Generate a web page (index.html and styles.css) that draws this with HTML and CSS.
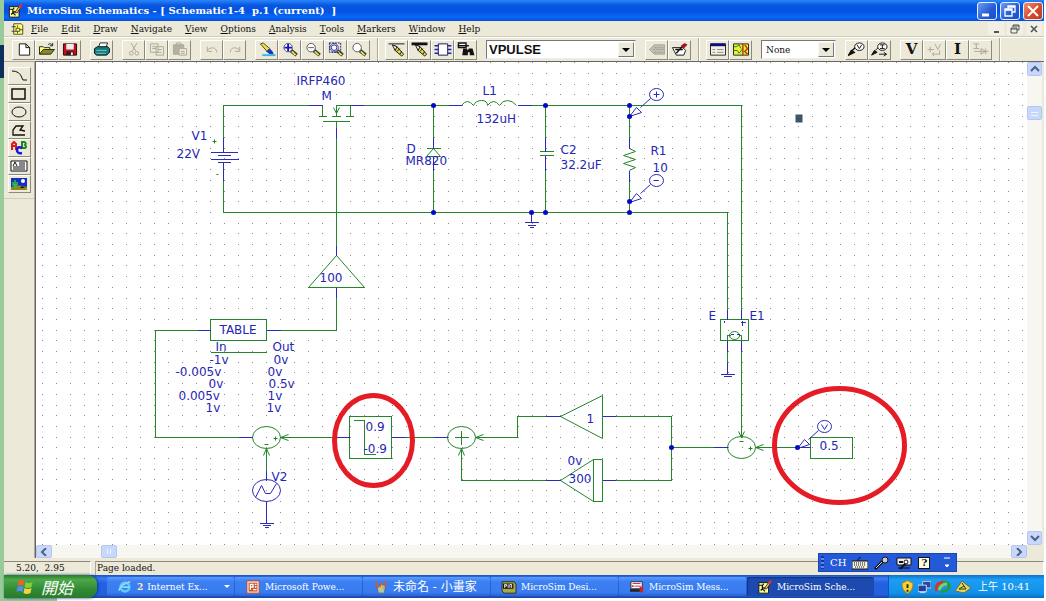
FILE: index.html
```html
<!DOCTYPE html>
<html lang="zh-Hant">
<head>
<meta charset="utf-8">
<title>MicroSim Schematics</title>
<link rel="stylesheet" href="styles.css">
</head>
<body>
<svg class="defs" aria-hidden="true">
  <symbol id="app" viewBox="0 0 16 16"><path d="M1 3h11v12H1z" fill="#ffff98" stroke="#111"/><path d="M1 6h4v3h3M3 12l2-2 3 3M6 4v2" fill="none" stroke="#111" stroke-width="1.4"/><path d="M7 10l5-7 2 1-4 6z" fill="#e8c070" stroke="#222"/><path d="M11 3l3-3 2 1-2 4z" fill="#d33"/></symbol>
  <symbol id="lens" viewBox="0 0 18 16"><path d="M10 9l6 5" stroke="#333" stroke-width="4"/><path d="M11 10l4 4" stroke="#e8e04a" stroke-width="2"/><circle cx="7" cy="6" r="4.500" fill="#fff" stroke="#555"/></symbol>
  <symbol id="pencil" viewBox="0 0 18 16"><path d="M6 4l3 1 7 8-2 2-7-6z" fill="#e8df3f" stroke="#111"/><path d="M4 3l5 2-2 4z" fill="#fff" stroke="#111"/><path d="M9 10l3-3M12 13l2-3" stroke="#111"/></symbol>
</svg>
<main class="window">
  <header class="title">
    <svg class="ico"><use href="#app"/></svg>
    <h1>MicroSim Schematics - [ Schematic1-4 &nbsp;p.1 (current) &nbsp;]</h1>
    <div class="winbtns">
      <button type="button" aria-label="Minimize"><svg viewBox="0 0 18 16"><path d="M4 12h7" stroke="#fff" stroke-width="3"/></svg></button>
      <button type="button" aria-label="Restore"><svg viewBox="0 0 18 16"><path d="M7 6V3h7v6h-3M7 4h7M4 6h7v7H4zM4 7h7" fill="none" stroke="#fff" stroke-width="1.300"/></svg></button>
      <button type="button" class="close" aria-label="Close"><svg viewBox="0 0 18 16"><path d="M4 3l10 10M14 3L4 13" stroke="#fff" stroke-width="2"/></svg></button>
    </div>
  </header>
  <nav class="menu">
    <svg class="ico" viewBox="0 0 16 16"><path d="M3 1h10l2 2v12H3z" fill="#ffff70" stroke="#222"/><path d="M0 5h6M0 11h6M8 3v3M6 7h5v4H6zM11 9h4M8 11v3" fill="none" stroke="#222"/></svg>
    <button type="button"><u>F</u>ile</button><button type="button"><u>E</u>dit</button><button type="button"><u>D</u>raw</button><button type="button"><u>N</u>avigate</button><button type="button"><u>V</u>iew</button><button type="button"><u>O</u>ptions</button><button type="button"><u>A</u>nalysis</button><button type="button"><u>T</u>ools</button><button type="button"><u>M</u>arkers</button><button type="button"><u>W</u>indow</button><button type="button"><u>H</u>elp</button>
    <div class="mdibtns">
      <button type="button" aria-label="Minimize document"><svg viewBox="0 0 14 12"><path d="M5 9h5" stroke="#555" stroke-width="2"/></svg></button>
      <button type="button" aria-label="Restore document"><svg viewBox="0 0 14 12"><path d="M5 4V2h6v5H9M5 3h6M3 5h6v5H3zM3 6h6" fill="none" stroke="#555"/></svg></button>
      <button type="button" aria-label="Close document"><svg viewBox="0 0 14 12"><path d="M4 3l6 6M10 3L4 9" stroke="#555" stroke-width="1.600"/></svg></button>
    </div>
  </nav>
  <div class="toolbar" role="toolbar">
    <div class="group">
      <button type="button" aria-label="New"><svg viewBox="0 0 18 16"><path d="M4 2h7l4 4v8H4zM11 2v4h4" fill="#fff" stroke="#111"/></svg></button>
      <button type="button" aria-label="Open"><svg viewBox="0 0 18 16"><path d="M1 13V5h4l1 1h6v3" fill="#ffff70" stroke="#222"/><path d="M1 13l4-5h12l-4 5z" fill="#8a8a20" stroke="#222"/><path d="M10 3c2-2 4-1 5 1m0-3v3h-3" fill="none" stroke="#222"/></svg></button>
      <button type="button" aria-label="Save"><svg viewBox="0 0 18 16"><path d="M2 2h14v12H2z" fill="#c01020" stroke="#300"/><path d="M5 2h8v6H5z" fill="#eee"/><path d="M5 10h8v4H5z" fill="#222"/><path d="M10 11h2v3h-2z" fill="#eee"/></svg></button>
    </div>
    <div class="group"><button type="button" aria-label="Print"><svg viewBox="0 0 18 16"><path d="M5 6l2-5h8l-2 5" fill="#fff" stroke="#222"/><path d="M1 7l3-2h11l2 2v4l-3 3H3l-2-2z" fill="#127a80" stroke="#111"/><path d="M3 9h11M3 12h10" stroke="#7cc" stroke-width="1"/></svg></button></div>
    <div class="group off">
      <button type="button" aria-label="Cut"><svg viewBox="0 0 18 16"><path d="M6 1l5 9M12 1L7 10" /><circle cx="6" cy="12" r="2"/><circle cx="12" cy="12" r="2"/></svg></button>
      <button type="button" aria-label="Copy"><svg viewBox="0 0 18 16"><path d="M2 2h8v9H2zM4 5h4M4 7h4M8 5h8v9H8zM10 8h4M10 11h4"/></svg></button>
      <button type="button" aria-label="Paste"><svg viewBox="0 0 18 16"><path d="M2 3h11v10H2z" fill="#b5b1a2"/><path d="M5 1h5v3H5z"/><path d="M8 7h8v7H8zM10 10h4M10 12h4" fill="#ece9d8"/></svg></button>
    </div>
    <div class="group off">
      <button type="button" aria-label="Undo"><svg viewBox="0 0 18 16"><path d="M4 5v5h5M4 9c3-4 10-4 10 2"/></svg></button>
      <button type="button" aria-label="Redo"><svg viewBox="0 0 18 16"><path d="M14 5v5H9M14 9C11 5 4 5 4 11"/></svg></button>
    </div>
    <div class="group">
      <button type="button" aria-label="Redraw"><svg viewBox="0 0 18 16"><path d="M2 2l3-1 7 6-3 3z" fill="#f2df22" stroke="#444"/><path d="M8 10l4-3 3 3 1 3h-4z" fill="#1636c0"/><path d="M4 14h14" stroke="#35b5e8" stroke-width="2"/></svg></button>
      <button type="button" aria-label="Zoom in"><svg viewBox="0 0 18 16"><use href="#lens"/><path d="M7 2v8M3 6h8" stroke="#11c" stroke-width="2"/></svg></button>
      <button type="button" aria-label="Zoom out"><svg viewBox="0 0 18 16"><use href="#lens"/><path d="M4 6h6" stroke="#555"/></svg></button>
      <button type="button" aria-label="Zoom area"><svg viewBox="0 0 18 16"><use href="#lens"/><path d="M2 1h12v10H2z" fill="none" stroke="#117" stroke-dasharray="2 1"/><circle cx="7" cy="6" r="3" fill="none" stroke="#11c"/></svg></button>
      <button type="button" aria-label="Zoom to fit"><svg viewBox="0 0 18 16"><use href="#lens"/></svg></button>
    </div>
    <i class="sep"></i>
    <div class="group">
      <button type="button" aria-label="Draw wire"><svg viewBox="0 0 18 16"><path d="M0 2h17" stroke="#111"/><use href="#pencil"/></svg></button>
      <button type="button" aria-label="Draw bus"><svg viewBox="0 0 18 16"><path d="M0 2h17" stroke="#111" stroke-width="3"/><use href="#pencil"/></svg></button>
      <button type="button" aria-label="Draw block"><svg viewBox="0 0 18 16"><path d="M4 2h10v12H4z" fill="#fff" stroke="#115"/><path d="M0 4h4M0 8h4M0 12h4M14 4h4M14 8h4M14 12h4" stroke="#22b" stroke-width="1.500"/></svg></button>
      <button type="button" aria-label="Get new part"><svg viewBox="0 0 18 16"><path d="M1 1h8v5H1zM0 4h12" fill="#fff" stroke="#111" stroke-width="1.500"/><path d="M6 7h4l1 2 1-2h4l2 7h-5v-3h-2v3H5z" fill="#111"/></svg></button>
    </div>
    <label class="combo part"><select aria-label="Part name"><option>VPULSE</option></select><span><svg viewBox="0 0 8 4"><path d="M0 0h8L4 4z"/></svg></span></label>
    <div class="group">
      <button type="button" class="dim" aria-label="Edit attributes"><svg viewBox="0 0 18 16"><path d="M1 8l5-5h11v10H6z" fill="#c2bfb0" stroke="#aaa797"/><path d="M6 6h10M5 8h11M6 11h10" stroke="#999" stroke-dasharray="2 1"/></svg></button>
      <button type="button" aria-label="Edit symbol"><svg viewBox="0 0 18 16"><path d="M1 6h11l3 3-2 5H5l-2-4z" fill="#fff" stroke="#111"/><path d="M5 12l8-9M4 8h8" stroke="#111" stroke-width="1.500"/><path d="M10 4l4-3 3 2-4 4z" fill="#a12"/></svg></button>
    </div>
    <i class="sep"></i>
    <div class="group">
      <button type="button" aria-label="Analysis setup"><svg viewBox="0 0 18 16"><path d="M1 2h16v12H1z" fill="#f4f2e4" stroke="#222"/><path d="M1 3h16" stroke="#117" stroke-width="3"/><path d="M3 8h3M3 11h3M8 8h7M8 11h7" stroke="#888"/></svg></button>
      <button type="button" aria-label="Simulate"><svg viewBox="0 0 18 16"><path d="M1 2h16v12H1z" fill="#e9f238" stroke="#222"/><path d="M1 9h4l2 3 4-5M1 5h3l3-2 2 4" fill="none" stroke="#173"/><path d="M11 2v12M13 3l3 4-3 3 3 3" fill="none" stroke="#b31" stroke-width="1.500"/></svg></button>
    </div>
    <label class="combo color"><select aria-label="Marker colour"><option>None</option></select><span><svg viewBox="0 0 8 4"><path d="M0 0h8L4 4z"/></svg></span></label>
    <div class="group">
      <button type="button" aria-label="Voltage marker"><svg viewBox="0 0 18 16"><path d="M0 14l3-5 3 2zM4 9l4-4" fill="#111" stroke="#111" stroke-width="1.500"/><ellipse cx="11.500" cy="5" rx="5" ry="4" fill="#fff" stroke="#111"/><path d="M9 3l2.500 4L14 3" fill="none" stroke="#111"/></svg></button>
      <button type="button" aria-label="Current marker"><svg viewBox="0 0 18 16"><path d="M0 14l3-5 3 2zM4 9l4-4" fill="#111" stroke="#111"/><path d="M8 13h8m-3-2l3 2-3 2" fill="none" stroke="#111"/><ellipse cx="11.500" cy="5" rx="5" ry="4" fill="#fff" stroke="#111"/><path d="M9 3h5M11.500 3v4M9 7h5" stroke="#111"/></svg></button>
    </div>
    <div class="group letters">
      <button type="button" aria-label="Show voltages">V</button>
      <button type="button" class="dim" aria-label="Toggle voltage"><svg viewBox="0 0 18 16"><path d="M1 8h7M4 5v6M9 2l3 6 3-6M6 13h8V9M8 11l-2 2 2 2" fill="none" stroke="#aaa797"/></svg></button>
      <button type="button" aria-label="Show currents">I</button>
      <button type="button" class="dim" aria-label="Toggle current"><svg viewBox="0 0 18 16"><path d="M1 2h6M4 2v5M1 7h6M2 10h15M9 7v6l5-3zM14 7v6" fill="none" stroke="#aaa797"/></svg></button>
    </div>
    <i class="sep"></i>
  </div>
  <section class="work">
    <aside class="palette">
      <div>
      <button type="button" aria-label="Arc"><svg viewBox="0 0 18 14"><path d="M2 2q8 0 10 7l1 2h4" fill="none" stroke="#111"/></svg></button>
      <button type="button" aria-label="Box"><svg viewBox="0 0 18 14"><path d="M2 2h13v10H2z" fill="none" stroke="#111" stroke-width="1.500"/></svg></button>
      <button type="button" aria-label="Circle"><svg viewBox="0 0 18 14"><ellipse cx="9" cy="7" rx="7" ry="5" fill="none" stroke="#111"/></svg></button>
      <button type="button" aria-label="Polyline"><svg viewBox="0 0 18 14"><path d="M15 12H3V7l3-4h7l-3 4 5 1" fill="none" stroke="#111" stroke-width="1.300"/></svg></button>
      <button type="button" aria-label="Text"><svg viewBox="0 0 18 14"><path d="M2 9V3l2-2 2 2v6M2 5h4" fill="none" stroke="#e01818" stroke-width="2"/><path d="M12 1v6h3q2-1 0-3 2-2-1-3z" fill="none" stroke="#178a26" stroke-width="2"/><path d="M12 7q-5-2-5 2t5 3" fill="none" stroke="#1818d8" stroke-width="2.500"/></svg></button>
      <button type="button" aria-label="Text box"><svg viewBox="0 0 18 14"><path d="M1 2h16v10H1z" fill="#fff" stroke="#111"/><path d="M3 7l2-4 2 4M9 4h6M9 6h6M3 8h12M3 10h12" fill="none" stroke="#111"/></svg></button>
      <button type="button" aria-label="Picture"><svg viewBox="0 0 18 14"><path d="M1 1h16v12H1z" fill="#1230c0"/><path d="M1 10q8-3 16 0v3H1z" fill="#8a8a20"/><path d="M5 3v8M3 5v3h4V5" fill="none" stroke="#2fc44a" stroke-width="1.500"/><circle cx="13" cy="4" r="2" fill="#fff"/><path d="M10 11l2-2 3 2z" fill="#111"/></svg></button>
      </div>
    </aside>
    <div class="view">
      <svg class="canvas" role="img" aria-label="Buck converter schematic">
        <defs>
          <pattern id="grid" width="14" height="107" patternUnits="userSpaceOnUse" patternTransform="translate(6,0)"><path d="M0 0h1v1H0zM0 11h1v1H0zM0 22h1v1H0zM0 32h1v1H0zM0 43h1v1H0zM0 54h1v1H0zM0 64h1v1H0zM0 75h1v1H0zM0 86h1v1H0zM0 96h1v1H0z" fill="#8c8c8c"/></pattern>
          <g id="probe"><path d="M21 -18L11 -9M0 0L7 -9L12 -4Z"/><ellipse cx="27" cy="-22" rx="7" ry="6"/></g>
        </defs>
        <rect width="100%" height="100%" fill="url(#grid)"/>
        <g transform="translate(-35.5,-61.5)">
          <g class="wire">
            <path d="M223 137V105H308M322 105V116M318 116H326M331 116H340M336 116V105H350V116M345 116H353M322 121H349M336 121V127M336 138V245M363 105H448M531 105H741V309"/>
            <path d="M223 180V212H727V309M433 105V137M433 170V212M545 105V137M545 170V212M629 105V137M629 181V212"/>
            <path d="M539 151H553M539 155H553M426 148H440M336 297V330H280M210 319H266V340H210ZM197 330H155V437H238M210 352H266"/>
            <path d="M280 437H335M266 448V470M349 416H391V458H349ZM353 420H364V454H375M405 437H433M475 437H517V416H545M615 416H671V480H615M545 480H461V448M671 447H713M755 447H797M810 437H852V458H810Z"/>
            <path d="M720 319H748V340H720ZM741 351V437M727 351V362M727 340V335H730M741 340V335H738M461 430V444M454 437H468"/>
          </g>
          <g class="wire soft">
            <path d="M333 107l3 6 3-6M433 148l-7 8h14zM461 105q6-8 12 0 2-5 8-5t6 5q6-8 12 0 3-5 8-5t9 5"/>
            <path d="M629 148l6 3-12 4 12 4-12 4 12 4-6 3M336 255L308 287H364ZM560 416L602 395V438ZM560 480L593 459H602V501H593ZM593 459V501"/>
            <ellipse cx="266" cy="437" rx="14" ry="11"/><ellipse cx="461" cy="437" rx="14" ry="11"/><ellipse cx="741" cy="447" rx="14" ry="11"/><ellipse cx="734" cy="335" rx="5" ry="4"/>
            <path d="M288 434l-8 3 8 3M483 434l-8 3 8 3M763 444l-8 3 8 3M263 455l3-7 3 7M458 455l3-7 3 7M738 431l3 6 3-6M212 141h4M214 139v4M216 174h2M273 438h4M275 436v4M264 444h4M748 448h4M750 446v4M739 441h4"/>
          </g>
          <g class="pin">
            <path d="M308 105H322M350 105H363M448 105H461M517 105H531M223 137V152M210 152H237M217 155H230M210 159H238M217 162H230M223 162V180M336 127V138M336 245V255M433 137V148M433 156V170M545 137V151M545 155V170M629 137V148M629 170V181"/>
            <path d="M531 212V222M524 222H538M527 225H535M529 227H533M336 287V297M280 330H266M210 330H197M238 437H252M335 437H349M391 437H405M433 437H447M545 416H560M602 416H615M560 480H545M602 480H615M713 447H727M797 447H810"/>
            <path d="M266 470V480M266 501V523M259 523H273M262 525H270M264 527H268M727 309V319M741 309V319M727 340V351M741 340V351M727 362V374M720 374H734M723 376H731M740 322H745M742 320V325M724 320V322M730 334h3M736 334h3"/>
          </g>
          <g class="pin soft">
            <ellipse cx="266" cy="490" rx="14" ry="11"/><path d="M255 497l6-12 4 8h5l6-10"/>
            <use href="#probe" x="629" y="116"/><use href="#probe" x="629" y="202"/><use href="#probe" x="797" y="448"/>
            <path d="M653 94h6M656 91v6M653 180h5M821 424l3 5 3-5"/>
          </g>
          <g class="joint"><circle cx="433" cy="105" r="2.500"/><circle cx="545" cy="105" r="2.500"/><circle cx="629" cy="105" r="2.500"/><circle cx="629" cy="116" r="2.500"/><circle cx="629" cy="201" r="2.500"/><circle cx="629" cy="212" r="2.500"/><circle cx="545" cy="212" r="2.500"/><circle cx="531" cy="212" r="2.500"/><circle cx="433" cy="212" r="2.500"/><circle cx="671" cy="447" r="2.500"/><circle cx="797" cy="447" r="2.500"/></g>
          <g class="label">
            <text x="296" y="84">IRFP460</text><text x="321" y="99">M</text><text x="482" y="94">L1</text><text x="476" y="122">132uH</text>
            <text x="191" y="139">V1</text><text x="176" y="157">22V</text><text x="406" y="152">D</text><text x="405" y="164">MR820</text>
            <text x="560" y="153">C2</text><text x="560" y="168">32.2uF</text><text x="650" y="154">R1</text><text x="652" y="171">10</text>
            <text x="319" y="281">100</text><text x="219" y="333">TABLE</text><text x="215" y="350">In</text><text x="272" y="350">Out</text>
            <text x="209" y="363">-1v</text><text x="175" y="375">-0.005v</text><text x="208" y="387">0v</text><text x="178" y="399">0.005v</text><text x="205" y="411">1v</text>
            <text x="273" y="363">0v</text><text x="267" y="375">0v</text><text x="268" y="387">0.5v</text><text x="267" y="399">1v</text><text x="266" y="411">1v</text>
            <text x="708" y="319">E</text><text x="749" y="319">E1</text><text x="271" y="480">V2</text><text x="567" y="464">0v</text><text x="568" y="482">300</text>
            <text x="586" y="422">1</text><text x="365" y="430">0.9</text><text x="363" y="452">-0.9</text><text x="819" y="449">0.5</text>
          </g>
          <rect x="795" y="114" width="7" height="8" fill="#3e5566"/>
          <g class="mark"><ellipse cx="373" cy="440" rx="39" ry="45"/><ellipse cx="839" cy="445" rx="65" ry="57"/></g>
        </g>
      </svg>
      <div class="vbar">
        <button type="button" aria-label="Scroll up"><svg viewBox="0 0 10 8"><path d="M1 6l4-4 4 4"/></svg></button>
        <i class="thumb"></i>
        <button type="button" class="last" aria-label="Scroll down"><svg viewBox="0 0 10 8"><path d="M1 2l4 4 4-4"/></svg></button>
      </div>
      <div class="hbar">
        <button type="button" aria-label="Scroll left"><svg viewBox="0 0 10 8"><path d="M7 0L3 4l4 4"/></svg></button>
        <i class="thumb"></i>
        <button type="button" class="last" aria-label="Scroll right"><svg viewBox="0 0 10 8"><path d="M3 0l4 4-4 4"/></svg></button>
      </div>
    </div>
  </section>
  <footer class="status"><span class="coords">5.20, &nbsp;2.95</span><span class="message">Page loaded.</span></footer>
  <nav class="taskbar">
    <button type="button" class="start"><svg viewBox="0 0 18 16"><path d="M2 2q4-2 6 0L7 7Q5 5 1 7z" fill="#f0602c"/><path d="M9 3q3 2 7 0l-1 5q-4 2-7 0z" fill="#83d03c"/><path d="M1 8q4-2 6 0l-1 5q-3-2-6 0z" fill="#5090f4"/><path d="M8 9q3 2 7 0l-1 5q-4 2-7 0z" fill="#fad23c"/></svg><i>開始</i></button>
    <div class="tasks">
      <button type="button"><svg viewBox="0 0 16 16"><circle cx="8" cy="8" r="5" fill="none" stroke="#5fc8f4" stroke-width="3"/><path d="M5 8h8M1 12Q3 5 14 2" fill="none" stroke="#8bdcff" stroke-width="2"/></svg><b>2</b><span>Internet Ex...</span><svg class="drop" viewBox="0 0 8 4"><path d="M1 0h6L4 3z" fill="#fff"/></svg></button>
      <button type="button"><svg viewBox="0 0 16 16"><path d="M1 1h14v14H1z" fill="#f5e6dc" stroke="#b5452a"/><path d="M3 3h10v10H3z" fill="#c6542e"/><path d="M5 11V5h3v3H5M10 5h2M10 8h2M8 11h4" fill="none" stroke="#fff" stroke-width="1.500"/></svg><span>Microsoft Powe...</span></button>
      <button type="button"><svg viewBox="0 0 16 16"><path d="M3 7h10l-1 8H5z" fill="#a0c8c0" stroke="#567"/><path d="M5 9L2 2M8 10V3M10 9l4-7" stroke="#e0562c" stroke-width="2"/><path d="M7 12l2-5 3 1" stroke="#e7cb35" stroke-width="2" fill="none"/></svg><span class="cjk">未命名 - 小畫家</span></button>
      <button type="button"><svg viewBox="0 0 16 16"><path d="M0 2h14l2 3v10H2l-2-3z" fill="#a9aa46" stroke="#222"/><path d="M1 4h12v6H1z" fill="#111"/><path d="M3 9V5h2v2H3M7 5v4M9 9V5h2v4" fill="none" stroke="#fff"/></svg><span>MicroSim Desi...</span></button>
      <button type="button"><svg viewBox="0 0 16 16"><path d="M1 2h13v8H1z" fill="#fff" stroke="#222"/><path d="M3 4h9M5 7h8" stroke="#b22"/><path d="M0 12h14" stroke="#222" stroke-width="3"/><path d="M11 8h4v6h-4z" fill="#c22"/><path d="M2 7h2" stroke="#c22" stroke-width="2"/></svg><span>MicroSim Mess...</span></button>
      <button type="button" class="active"><svg><use href="#app"/></svg><span>MicroSim Sche...</span></button>
    </div>
    <div class="tray">
      <svg viewBox="0 0 14 14"><path d="M7 0l6 3q0 8-6 11Q1 11 1 3z" fill="#f6d23a" stroke="#a67c10"/><path d="M7 4v4M7 10v2" stroke="#222" stroke-width="2"/></svg>
      <svg viewBox="0 0 14 14"><path d="M5 1h9v7H5z" fill="#2848a8" stroke="#ccd"/><path d="M0 5h9v7H0z" fill="#2040a0" stroke="#dde"/><path d="M2 13h6" stroke="#dde"/></svg>
      <svg class="wide" viewBox="0 0 16 14"><path d="M2 11Q-1 4 8 2" fill="none" stroke="#d32" stroke-width="3"/><path d="M8 2q4 0 6 2M14 4q2 6-8 8" fill="none" stroke="#2a9a38" stroke-width="3"/><path d="M4 10q2-6 8-6" fill="none" stroke="#7bd068" stroke-width="3"/></svg>
      <svg class="wide" viewBox="0 0 16 14"><path d="M0 11l7-10 9 7-7 5z" fill="#e0d84a" stroke="#666"/><path d="M4 9l5-3 2 3zM7 3l2 3" fill="none" stroke="#333"/></svg>
      <time>上午 10:41</time>
    </div>
  </nav>
  <div class="langbar">
    <i class="grip"></i><span>CH</span>
    <button type="button" aria-label="Keyboard"><svg viewBox="0 0 16 14"><path d="M6 5q0-4 3-3" fill="none" stroke="#111"/><path d="M0 5h16v8H0z" fill="#f4f1de" stroke="#111"/><path d="M2 7h12M2 9h12M3 11h10" stroke="#111" stroke-dasharray="1 1"/></svg></button>
    <button type="button" aria-label="Microphone"><svg viewBox="0 0 16 14"><path d="M1 13l8-8" stroke="#111" stroke-width="3"/><path d="M2 12l8-8" stroke="#ddd"/><circle cx="11" cy="4" r="3" fill="#ccc" stroke="#111"/></svg></button>
    <button type="button" aria-label="Tools"><svg viewBox="0 0 16 14"><path d="M1 2h14v7H1z" fill="#eee" stroke="#111"/><path d="M3 6h4M4 13l7-7" stroke="#111" stroke-width="2"/><circle cx="10" cy="6" r="2" fill="#fff" stroke="#111"/><path d="M2 12h12" stroke="#111"/></svg></button>
    <button type="button" class="help" aria-label="Help">?</button>
    <svg class="more" viewBox="0 0 6 12"><path d="M0 1h6M1 8h4l-2 2z" fill="#fff" stroke="#fff"/></svg>
  </div>
</main>
</body>
</html>
```
FILE: styles.css
```css
* { box-sizing: border-box; }
body {
  margin: 0;
  min-height: 100vh;
  padding: 0 2px 3px 4px;
  display: flex;
  background:
    linear-gradient(#0a2f5c, #0a2f5c) 0 45px / 4px 33px no-repeat,
    linear-gradient(#98cb98, #98cb98) 0 0 / 4px 100% no-repeat,
    linear-gradient(#98cb98, #98cb98) 0 100% / 57px 3px no-repeat,
    #fff;
  font: 9px/12px "DejaVu Serif", "Noto Sans CJK TC", serif;
  color: #111;
}
button, select { font: inherit; color: inherit; }
button { margin: 0; padding: 0; border: 0; background: none; display: flex; align-items: center; justify-content: center; }
.defs { position: absolute; width: 0; height: 0; }
.window { position: relative; flex: 1; min-width: 0; display: flex; flex-direction: column; background: #ece9d8; }

.title {
  display: flex;
  align-items: center;
  height: 21px;
  padding-left: 4px;
  gap: 4px;
  background: linear-gradient(#2a86f8, #0657e2 25%, #0452e0 55%, #0868fb 80%, #0450d8);
}
.title h1 { flex: 1; margin: 0; font-size: 10px; font-weight: bold; color: #fff; white-space: nowrap; }
.ico { width: 15px; height: 14px; }
.winbtns { display: flex; gap: 3px; padding-right: 1px; }
.winbtns button { width: 20px; height: 18px; border: 1px solid #e8f0ff; border-radius: 3px; background: linear-gradient(135deg, #6d9df2, #2459d6 60%, #1e4fc8); }
.winbtns .close { background: linear-gradient(135deg, #ee9078, #d84a28 55%, #c03c1c); }
.winbtns svg { width: 18px; height: 16px; }

.menu { display: flex; align-items: center; height: 16px; padding-left: 6px; gap: 13px; border-bottom: 1px solid #d0ccba; }
.menu .ico { height: 12px; margin-right: -7px; }
.mdibtns { display: flex; gap: 3px; margin-left: auto; padding-right: 2px; }
.mdibtns button { width: 16px; height: 13px; background: #f2f0e6; }
.mdibtns svg { width: 14px; height: 12px; }

.toolbar { display: flex; align-items: center; height: 24px; padding-left: 8px; gap: 9px; border-top: 1px solid #fff; overflow: hidden; }
.group { display: flex; flex: none; }
.group button, .palette button {
  border: 1px solid;
  border-color: #fff #8c897a #8c897a #fff;
  background: #ece9d8;
}
.group button { width: 23px; height: 20px; }
.group svg { width: 18px; height: 15px; }
.off svg { fill: none; stroke: #aaa797; }
.letters { font: bold 15px/15px "DejaVu Serif", serif; }
.sep { flex: none; width: 1px; height: 24px; margin: 0 -2px; background: #aca899; box-shadow: 1px 0 #fff; }
.combo { display: flex; flex: none; height: 19px; border: 1px solid; border-color: #777 #eee #eee #777; background: #fff; padding: 1px; }
.combo select { flex: 1; min-width: 0; appearance: none; border: 0; padding: 0 0 0 1px; background: #fff; outline: 0; }
.combo span { width: 16px; display: grid; place-items: center; background: #ece9d8; border: 1px solid; border-color: #f8f8f0 #777 #777 #f8f8f0; }
.combo span svg { width: 8px; height: 4px; }
.part { width: 150px; font: bold 13px/15px "Liberation Sans", sans-serif; }
.color { width: 75px; }
.color select { padding-left: 3px; }

.work { flex: 1; display: flex; min-height: 0; }
.palette { width: 31px; flex: none; border-top: 1px solid #aca899; border-right: 1px solid #aca899; }
.palette div { display: grid; justify-content: center; padding: 5px 0; border-bottom: 1px solid #d0ccba; }
.palette button { width: 23px; height: 18px; }
.palette svg { width: 18px; height: 14px; }
.view {
  flex: 1;
  min-width: 0;
  display: grid;
  grid-template: minmax(0, 1fr) 13px / minmax(0, 1fr) 15px;
  border-left: 1px solid #666;
  border-top: 1px solid #666;
  padding-right: 2px;
}
.canvas { width: 100%; height: 100%; background: #fff; overflow: hidden; }
.canvas g { fill: none; stroke-width: 1; }
.wire { stroke: #23862a; shape-rendering: crispEdges; }
.pin { stroke: #2b2bb8; shape-rendering: crispEdges; }
.soft { shape-rendering: auto; }
.canvas .joint { fill: #0808c8; }
.canvas .label { fill: #2626b4; font: 12px "DejaVu Sans", sans-serif; }
.canvas .mark { stroke: #e51c26; stroke-width: 5; }

.vbar, .hbar { display: flex; background: #f7f6f1; }
.vbar { flex-direction: column; }
.vbar button, .vbar .thumb { height: 14px; }
.hbar button, .hbar .thumb { width: 16px; }
.vbar button, .hbar button, .thumb { border: 1px solid #b5c7f0; border-radius: 2px; background: #c8d8fc; }
.vbar svg, .hbar svg { width: 10px; height: 8px; fill: none; stroke: #4d6185; stroke-width: 2; }
.vbar .thumb { margin-top: 30px; background: repeating-linear-gradient(#c8d8fc 0 2px, #eef4fe 2px 3px) content-box, #c8d8fc; padding: 3px; }
.hbar .thumb { margin-left: 49px; background: repeating-linear-gradient(90deg, #c8d8fc 0 2px, #eef4fe 2px 3px) content-box, #c8d8fc; padding: 3px; }
.vbar .last { margin-top: auto; }
.hbar .last { margin-left: auto; }

.status { display: flex; gap: 4px; height: 17px; padding-top: 3px; }
.status span { border-top: 1px solid #8c897a; border-right: 1px solid #fff; white-space: pre; }
.coords { width: 87px; padding-left: 12px; }
.message { flex: 1; padding-left: 1px; border-left: 1px solid #aca899; }

.taskbar { display: flex; height: 23px; background: linear-gradient(#1d50c0, #3b7cf2 15%, #2460e0 35%, #2360de 85%, #1a44a4); color: #fff; }
.start { width: 93px; gap: 6px; justify-content: flex-start; padding-left: 12px; border-radius: 0 9px 9px 0; background: linear-gradient(#2c7a2c, #4ca84a 20%, #328c34 60%, #2a7a2c); box-shadow: 1px 0 3px #123a8a; }
.start svg { width: 19px; height: 16px; }
.start i { font: italic 16px/20px "Noto Sans CJK TC", sans-serif; }
.tasks { flex: 1; min-width: 0; display: flex; gap: 1px; padding: 2px 14px 2px 10px; }
.tasks button { flex: 1; min-width: 0; justify-content: flex-start; gap: 4px; padding-left: 10px; border-radius: 2px; background: linear-gradient(#5a9cfb, #3b7ff2 25%, #3a7cee 80%, #2a62d4); white-space: nowrap; overflow: hidden; }
.tasks svg { flex: none; width: 16px; height: 14px; }
.tasks b { color: #ffe9b0; }
.tasks .cjk { font-size: 12px; }
.tasks .drop { width: 8px; height: 4px; margin: 0 3px 0 auto; }
.tasks .active { background: #1c4aae; box-shadow: inset 1px 1px 1px #12347e; }
.tray { display: flex; flex: none; align-items: center; gap: 4px; width: 156px; padding-left: 12px; border-left: 1px solid #0c56b8; background: linear-gradient(#0f72c8, #1c9ef4 20%, #1190e8 80%, #0d6cba); }
.tray svg { width: 13px; height: 14px; }
.tray .wide { width: 16px; }
.tray time { margin-left: 3px; font-size: 10px; white-space: nowrap; }

.langbar { position: absolute; right: 87px; bottom: 26px; width: 139px; height: 19px; display: flex; align-items: center; gap: 6px; padding: 0 6px 0 2px; background: #2459d8; border: 1px solid #1a46b4; color: #fff; font-size: 10px; }
.langbar svg { width: 16px; height: 14px; }
.grip { width: 3px; height: 13px; background: repeating-linear-gradient(#16389a 0 2px, #5a88ee 2px 4px); }
.help { width: 12px; height: 12px; border: 1px solid #111; background: #ffffe4; color: #111; font-weight: bold; }
.langbar .more { width: 6px; height: 12px; margin-left: auto; }
```
